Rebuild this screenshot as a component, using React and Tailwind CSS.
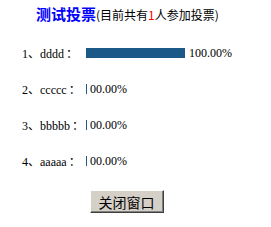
export default function App() {
  const rows = [
    { n: 1, name: 'dddd', w: 'w-[99px]', pct: '100.00%' },
    { n: 2, name: 'ccccc', w: 'w-px', pct: '00.00%' },
    { n: 3, name: 'bbbbb', w: 'w-px', pct: '00.00%' },
    { n: 4, name: 'aaaaa', w: 'w-px', pct: '00.00%' },
  ];

  return (
    <div className="h-[227px] w-[271px] bg-white font-['Liberation_Serif','Noto_Sans_CJK_SC',serif] text-[12px] text-black">
      <div className="flex items-end pl-[36px] pt-[5px]">
        <span className="font-['Noto_Sans_CJK_SC',sans-serif] text-[15px] font-bold leading-[18px] text-[#0000ff]">测试投票</span>
        <span className="font-['Noto_Sans_CJK_SC',sans-serif] text-[12px] leading-[17px]">
          (目前共有<span className="text-[#ff0000]">1</span>人参加投票)
        </span>
      </div>
      <div className="flex flex-col gap-[22px] pl-[22px] pt-[23px]">
        {rows.map((r) => (
          <div key={r.n} className="flex h-[14px] items-center">
            <span className="w-[64px] whitespace-nowrap">
              {r.n}、{r.name}<span className="pl-[2px] font-['Noto_Sans_CJK_SC',sans-serif]">：</span>
            </span>
            <span className={`${r.w} h-[10px] bg-[#1b5a88]`} />
            <span className={r.n === 1 ? 'pl-[4px]' : 'pl-[3px]'}>{r.pct}</span>
          </div>
        ))}
      </div>
      <div className="flex justify-center pt-[22px] pr-[18px]">
        <button className="h-[23px] w-[74px] border border-t-white border-l-white border-r-[#404040] border-b-[#404040] bg-[#d4d0c8] font-['Noto_Sans_CJK_SC',sans-serif] text-[14px] leading-none shadow-[inset_-1px_-1px_0_#808080]">
          关闭窗口
        </button>
      </div>
    </div>
  );
}
